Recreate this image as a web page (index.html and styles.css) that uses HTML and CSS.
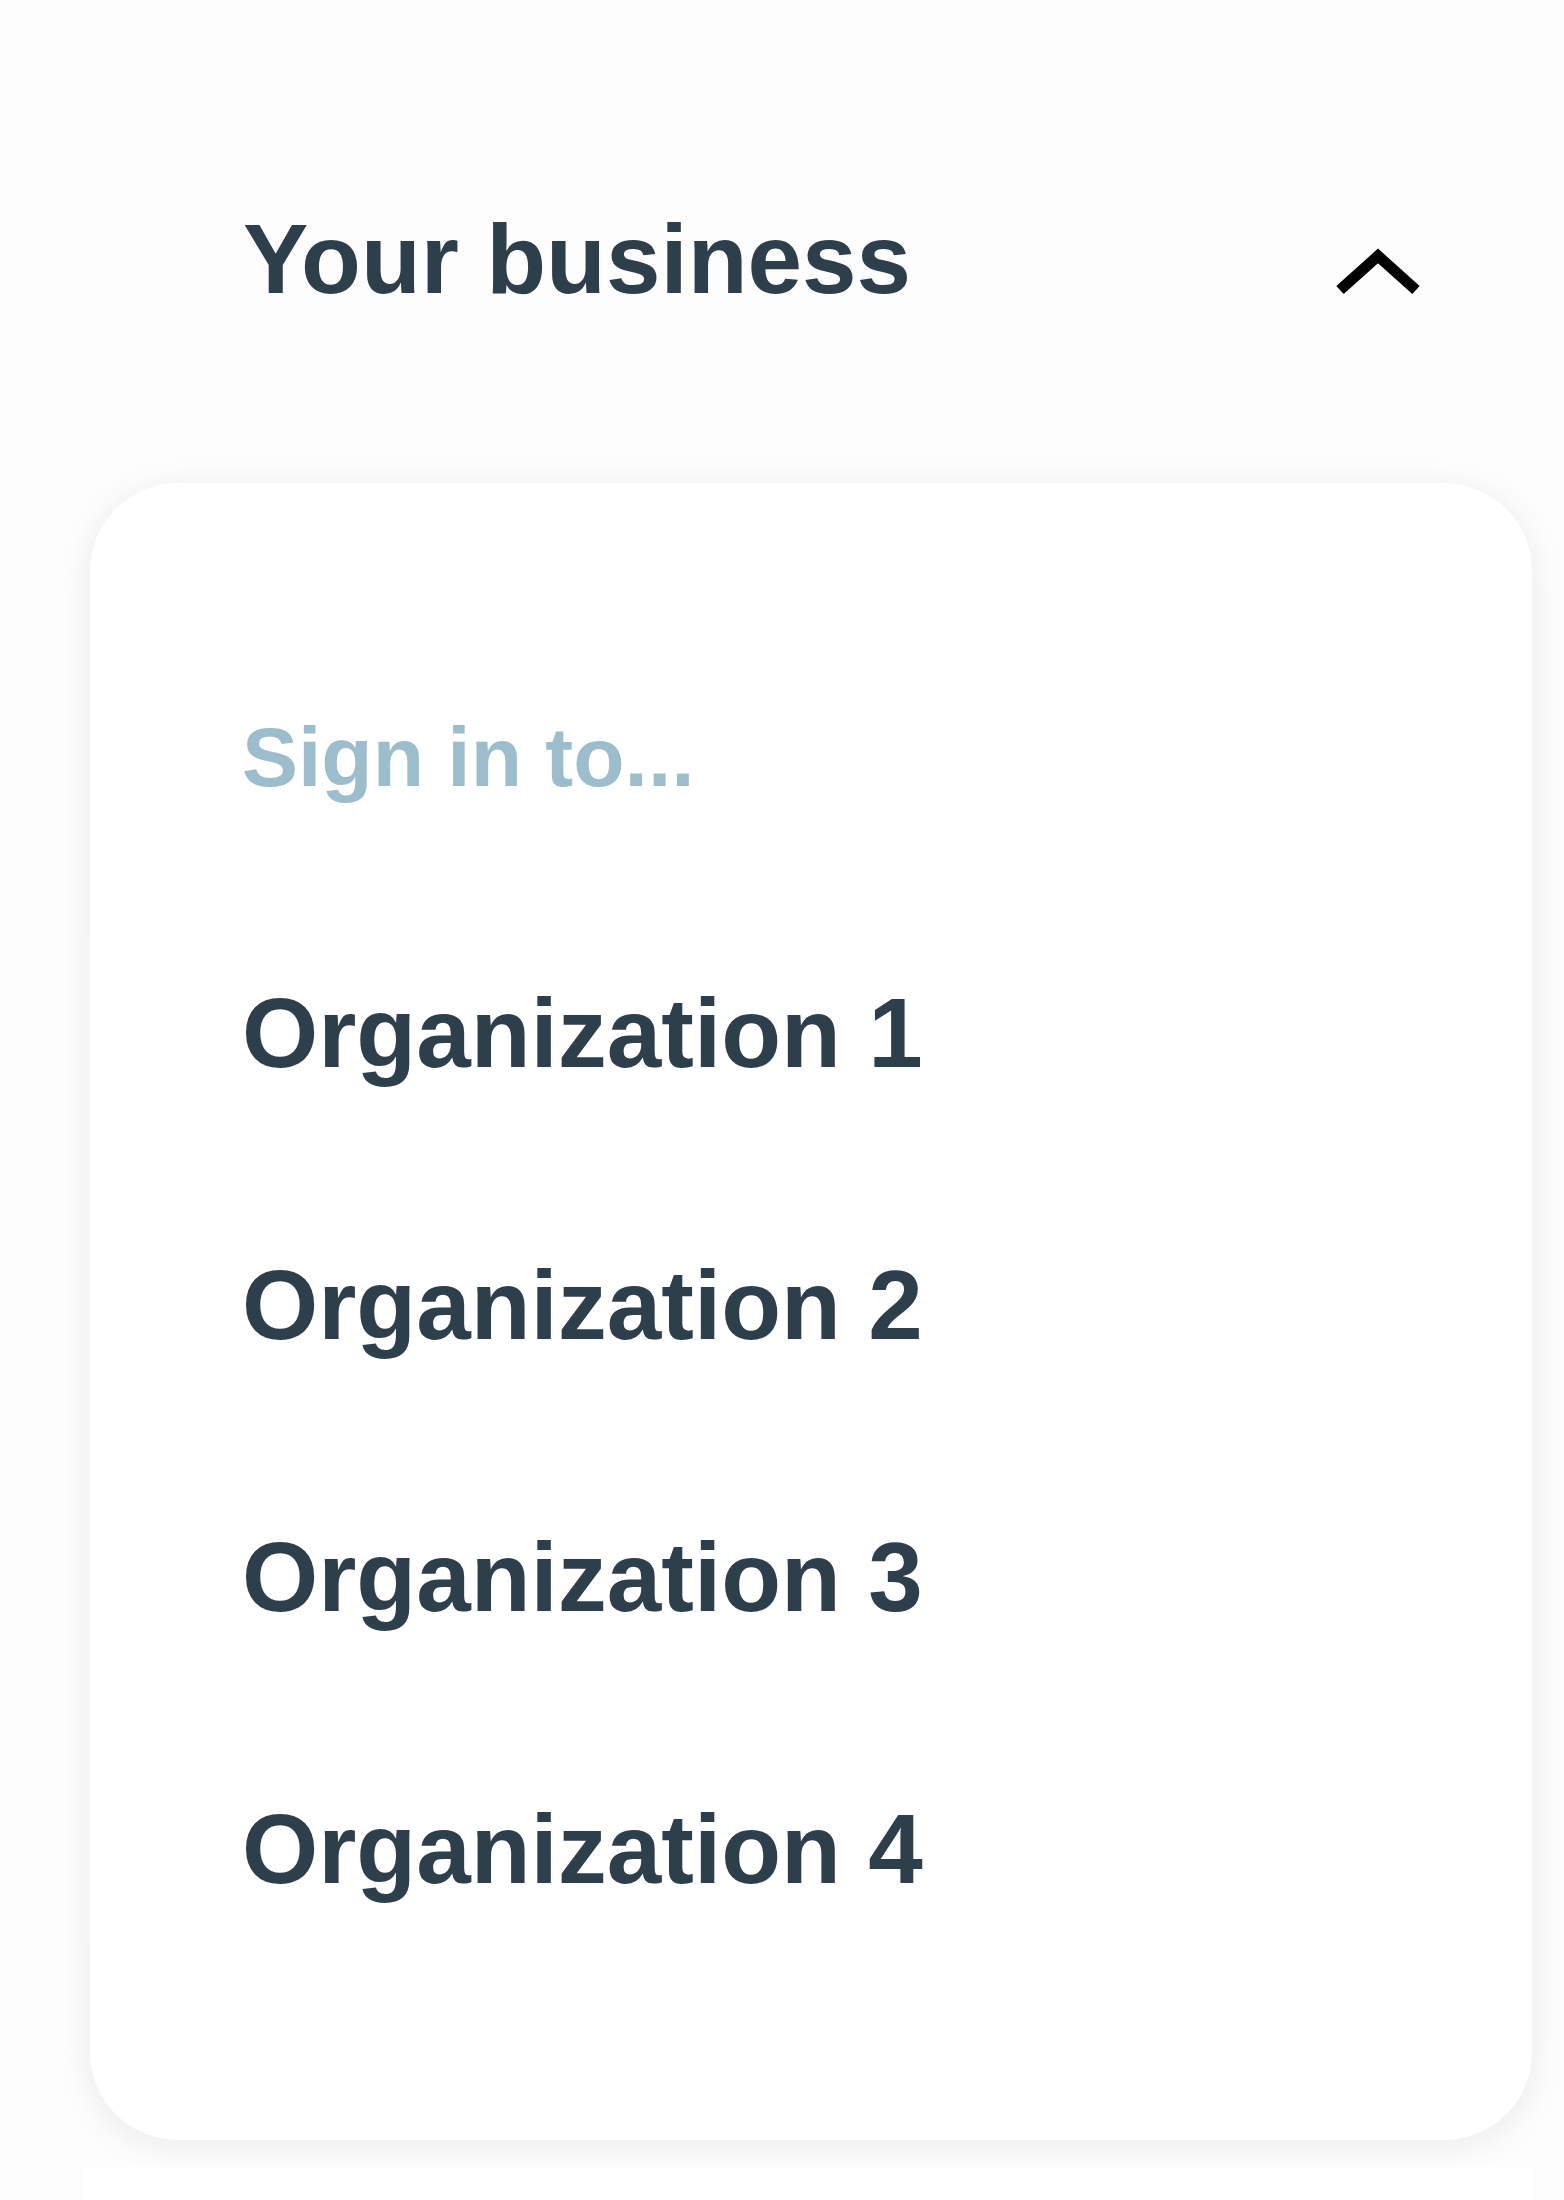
FILE: index.html
```html
<!DOCTYPE html>
<html lang="en">
<head>
  <meta charset="UTF-8">
  <meta name="viewport" content="width=device-width, initial-scale=1.0">
  <title>Your business</title>
  <link rel="stylesheet" href="styles.css">
</head>
<body>

  <header class="biz-toggle">
    <span class="biz-title">Your business</span>
    <svg class="chevron" viewBox="0 0 90 50" width="90" height="50" aria-hidden="true">
      <path d="M7 42 L45 8 L83 42" fill="none" stroke="#000" stroke-width="11" stroke-linejoin="miter"/>
    </svg>
  </header>

  <main class="content">
    <div class="panel panel-top"></div>
    <div class="panel panel-bottom"></div>

    <div class="dropdown">
      <p class="dropdown-label">Sign in to...</p>
      <ul class="org-list">
        <li class="org">Organization 1</li>
        <li class="org">Organization 2</li>
        <li class="org">Organization 3</li>
        <li class="org">Organization 4</li>
      </ul>
    </div>
  </main>

</body>
</html>
```

FILE: styles.css
```css
body {
  margin: 0;
  background-color: #fdfdfd;
  font-family: "Liberation Sans", Arial, Helvetica, sans-serif;
  font-weight: 700;
  color: #2e3f4c;
}
.biz-toggle {
  display: flex;
  justify-content: space-between;
  align-items: flex-start;
  height: 239px;
  padding: 201px 141px 0 243px;
}
.biz-title {
  font-size: 98px;
  line-height: 1.2;
}
.chevron {
  margin-top: 47px;
}
.content {
  position: relative;
  padding-top: 493px;
}
.panel {
  background-color: #fff;
  margin-left: 84px;
  margin-right: 32px;
}
.panel-top {
  height: 1014px;
}
.panel-bottom {
  height: 33px;
  margin-top: 220px;
}
.dropdown {
  position: absolute;
  top: 43px;
  left: 90px;
  width: 1442px;
  box-sizing: border-box;
  padding: 224px 0 155px 152px;
  background-color: #fff;
  border-radius: 88px;
  box-shadow: 0 6px 36px rgba(20, 30, 30, 0.08);
}
.dropdown-label {
  margin: 0 0 89px 0;
  font-size: 84px;
  line-height: 1.2;
  color: #9cbdcc;
}
.org-list {
  list-style: none;
  margin: 0;
  padding: 0;
}
.org {
  font-size: 98px;
  line-height: 116px;
  padding: 78px 0;
}
```
